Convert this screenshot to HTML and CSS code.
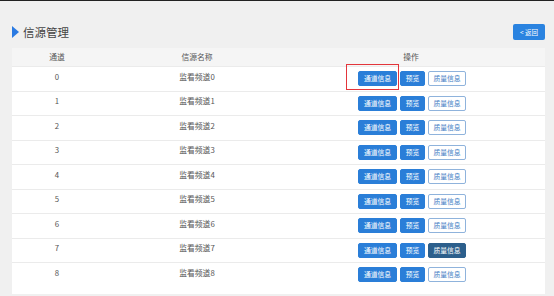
FILE: index.html
```html
<!DOCTYPE html>
<html lang="zh">
<head>
<meta charset="utf-8">
<link rel="stylesheet" href="styles.css">
</head>
<body>
<div class="topbar"></div>
<div class="page">
  <div class="titlebar">
    <div class="title"><span class="tri"></span><span class="title-text">信源管理</span></div>
    <button class="back">&lt; 返回</button>
  </div>
  <div class="table">
    <div class="row head">
      <div class="cell">通道</div>
      <div class="cell">信源名称</div>
      <div class="cell">操作</div>
      <div></div>
    </div>
    <div class="row">
      <div class="cell">0</div><div class="cell">监看频道0</div>
      <div class="ops"><span class="mark"></span><button class="btn fill">通道信息</button><button class="btn fill">预览</button><button class="btn line">质量信息</button></div><div></div>
    </div>
    <div class="row">
      <div class="cell">1</div><div class="cell">监看频道1</div>
      <div class="ops"><button class="btn fill">通道信息</button><button class="btn fill">预览</button><button class="btn line">质量信息</button></div><div></div>
    </div>
    <div class="row">
      <div class="cell">2</div><div class="cell">监看频道2</div>
      <div class="ops"><button class="btn fill">通道信息</button><button class="btn fill">预览</button><button class="btn line">质量信息</button></div><div></div>
    </div>
    <div class="row">
      <div class="cell">3</div><div class="cell">监看频道3</div>
      <div class="ops"><button class="btn fill">通道信息</button><button class="btn fill">预览</button><button class="btn line">质量信息</button></div><div></div>
    </div>
    <div class="row">
      <div class="cell">4</div><div class="cell">监看频道4</div>
      <div class="ops"><button class="btn fill">通道信息</button><button class="btn fill">预览</button><button class="btn line">质量信息</button></div><div></div>
    </div>
    <div class="row">
      <div class="cell">5</div><div class="cell">监看频道5</div>
      <div class="ops"><button class="btn fill">通道信息</button><button class="btn fill">预览</button><button class="btn line">质量信息</button></div><div></div>
    </div>
    <div class="row">
      <div class="cell">6</div><div class="cell">监看频道6</div>
      <div class="ops"><button class="btn fill">通道信息</button><button class="btn fill">预览</button><button class="btn line">质量信息</button></div><div></div>
    </div>
    <div class="row">
      <div class="cell">7</div><div class="cell">监看频道7</div>
      <div class="ops"><button class="btn fill">通道信息</button><button class="btn fill">预览</button><button class="btn dark">质量信息</button></div><div></div>
    </div>
    <div class="row last">
      <div class="cell">8</div><div class="cell">监看频道8</div>
      <div class="ops"><button class="btn fill">通道信息</button><button class="btn fill">预览</button><button class="btn line">质量信息</button></div><div></div>
    </div>
  </div>
</div>
</body>
</html>
```
FILE: styles.css
```css
html, body {
  margin: 0;
  padding: 0;
  background: #f0f0f0;
  font-family: "Noto Sans CJK SC", "Noto Sans", sans-serif;
  color: #555;
  overflow: hidden;
}
.topbar {
  height: 1px;
  background: #222;
}
.page {
  padding: 0 9px 0 12px;
}
.titlebar {
  display: flex;
  align-items: center;
  justify-content: space-between;
  height: 16px;
  margin-top: 23px;
}
.title {
  display: flex;
  align-items: center;
}
.tri {
  width: 0;
  height: 0;
  border-top: 6px solid transparent;
  border-bottom: 6px solid transparent;
  border-left: 7px solid #2a7ae2;
  margin-right: 4px;
}
.title-text {
  font-size: 11.5px;
  line-height: 14px;
  color: #444;
}
.back {
  width: 32px;
  height: 16px;
  border: none;
  border-radius: 2px;
  background: #2a83e0;
  color: #fff;
  font-family: inherit;
  font-size: 6.5px;
  padding: 0;
  line-height: 16px;
}
.table {
  margin-top: 8px;
  background: #fff;
  padding-bottom: 7px;
}
.row {
  display: grid;
  grid-template-columns: 90px 190px 238px 15px;
  height: 24.5px;
  align-items: center;
  border-top: 1px solid #ebebeb;
  box-sizing: border-box;
}
.row.head {
  height: 18px;
  background: #f5f5f5;
  border-top: none;
}
.row.head .cell {
  padding-bottom: 0;
}
.cell {
  text-align: center;
  font-size: 7.8px;
  line-height: 10px;
  padding-bottom: 4px;
}
.ops {
  position: relative;
  display: flex;
  justify-content: center;
  gap: 3px;
  padding-left: 2px;
}
.btn {
  height: 15px;
  padding: 0;
  border-radius: 2px;
  font-family: inherit;
  font-size: 6.8px;
  line-height: 13px;
  box-sizing: border-box;
}
.btn.fill {
  background: #2a7ed8;
  border: 1px solid #2a7ed8;
  color: #fff;
}
.btn.fill:first-of-type {
  width: 39px;
}
.btn.fill + .btn.fill {
  width: 25px;
}
.btn.line {
  width: 38px;
  background: #fff;
  border: 1px solid #8fb3dc;
  color: #3f7dc4;
}
.btn.dark {
  width: 38px;
  background: #2c5f8c;
  border: 1px solid #2c5f8c;
  color: #fff;
}
.mark {
  position: absolute;
  left: 54px;
  top: -7px;
  width: 53px;
  height: 26px;
  border: 1.5px solid #e3353b;
  box-sizing: border-box;
}
```
